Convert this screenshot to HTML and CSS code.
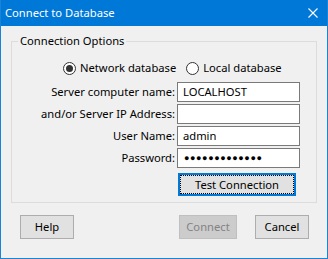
FILE: index.html
```html
<!DOCTYPE html>
<html>
<head>
<meta charset="utf-8">
<link rel="stylesheet" href="styles.css">
</head>
<body>
<div class="window">
  <div class="titlebar">
    <span class="title">Connect to Database</span>
    <svg class="close" width="10" height="10" viewBox="0 0 10 10"><path d="M0.5 0.5 L9.5 9.5 M9.5 0.5 L0.5 9.5" stroke="#fff" stroke-width="1.1" fill="none"/></svg>
  </div>
  <fieldset class="group">
    <legend class="legend">Connection Options</legend>
    <div class="radios">
      <div class="radio-item"><span class="radio checked"></span><span>Network database</span></div>
      <div class="radio-item"><span class="radio"></span><span>Local database</span></div>
    </div>
    <div class="form">
      <div class="label">Server computer name:</div>
      <div class="field">LOCALHOST</div>
      <div class="label">and/or Server IP Address:</div>
      <div class="field"></div>
      <div class="label">User Name:</div>
      <div class="field">admin</div>
      <div class="label">Password:</div>
      <div class="field dots">●●●●●●●●●●●●●</div>
      <div class="btn test">Test Connection</div>
    </div>
  </fieldset>
  <div class="actions">
    <div class="btn help">Help</div>
    <div class="spacer"></div>
    <div class="btn connect disabled">Connect</div>
    <div class="btn cancel">Cancel</div>
  </div>
</div>
</body>
</html>
```
FILE: styles.css
```css
* { box-sizing: border-box; }
html, body { margin: 0; padding: 0; }
body {
  font-family: "Noto Sans", "Open Sans", sans-serif;
  font-size: 11.2px;
  color: #000;
  background: #f0f0f0;
}
.window {
  width: 328px;
  height: 259px;
  border: 1px solid #1883d7;
  border-top: 0;
  background: #f0f0f0;
  display: flex;
  flex-direction: column;
}
.titlebar {
  height: 26px;
  background: #0078d7;
  color: #fff;
  display: flex;
  align-items: center;
  padding-left: 4px;
  padding-right: 9px;
  padding-bottom: 1px;
}
.title { flex: 1; line-height: 16px; }
.close { display: block; }
.group {
  margin: 7px 0 0 10px;
  width: 306px;
  height: 170px;
  border: 1px solid #dcdcdc;
  padding: 11px 16px 0 0;
  min-width: 0;
}
.legend {
  padding: 0 2px;
  margin-left: 6px;
  line-height: 16px;
}
.radios {
  display: flex;
  height: 16px;
  align-items: center;
  padding-left: 51px;
  gap: 10px;
}
.radio-item {
  display: flex;
  align-items: center;
  gap: 4px;
  line-height: 16px;
}
.radio {
  width: 13px;
  height: 13px;
  border: 1px solid #333;
  border-radius: 50%;
  background: #fff;
  display: flex;
  align-items: center;
  justify-content: center;
}
.radio.checked::after {
  content: "";
  width: 7px;
  height: 7px;
  border-radius: 50%;
  background: #333;
}
.form {
  margin-top: 6px;
  display: grid;
  grid-template-columns: 163px 123px;
  grid-auto-rows: 20px;
  column-gap: 2px;
  row-gap: 2px;
}
.label {
  text-align: right;
  line-height: 20px;
  white-space: nowrap;
}
.field {
  background: #fff;
  border: 1px solid #7a7a7a;
  padding-left: 5px;
  line-height: 18px;
}
.dots {
  font-size: 9px;
  letter-spacing: 0.6px;
  padding-left: 6px;
}
.btn {
  background: #e1e1e1;
  border: 1px solid #adadad;
  text-align: center;
  height: 24px;
  line-height: 22px;
}
.test {
  grid-column: 2;
  margin-top: 3px;
  margin-left: 1px;
  width: 118px;
  height: 23px;
  border: 2px solid #0078d7;
  line-height: 19px;
  outline: 1px dotted #000;
  outline-offset: -3px;
}
.actions {
  display: flex;
  margin-top: 12px;
  padding: 0 18px 0 19px;
}
.spacer { flex: 1; }
.help { width: 54px; }
.connect { width: 58px; }
.cancel { width: 54px; margin-left: 18px; }
.disabled {
  background: #cccccc;
  border-color: #bfbfbf;
  color: #838383;
}
```
